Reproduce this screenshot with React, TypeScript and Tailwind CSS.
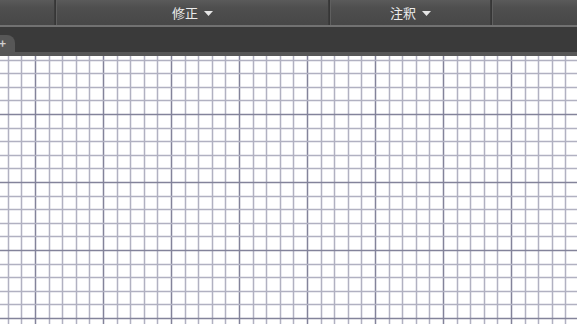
import React from "react";

function Caret() {
  return (
    <svg width="9" height="5" viewBox="0 0 9 5" className="ml-[6px] mt-[1px]">
      <path d="M0 0 H9 L4.5 5 Z" fill="#e6e6e6" />
    </svg>
  );
}

function MenuCell({ label, className }: { label?: string; className: string }) {
  return (
    <div
      className={`flex items-center justify-center h-full border-r border-r-[#363636] shadow-[inset_-1px_0_0_#3c3c3c,1px_0_0_#5f5f5f] ${className}`}
    >
      {label && (
        <>
          <span className="text-[13px] text-[#ececec] leading-none">{label}</span>
          <Caret />
        </>
      )}
    </div>
  );
}

const W = 577;
const H = 268;
const STEP = 13.6;

// graph paper: major lines every 5 cells, at x=35 and y=58 (grid coords)
function Grid() {
  const xs: { p: number; major: boolean }[] = [];
  for (let i = -3; 35 + i * STEP < W; i++) {
    const p = 35 + i * STEP;
    if (p < 0) continue;
    xs.push({ p: Math.round(p), major: ((i % 5) + 5) % 5 === 0 });
  }
  const ys: { p: number; major: boolean }[] = [];
  for (let i = -4; 58 + i * STEP < H; i++) {
    const p = 58 + i * STEP;
    if (p < 0) continue;
    ys.push({ p: Math.round(p), major: ((i % 5) + 5) % 5 === 0 });
  }
  return (
    <svg width={W} height={H} className="block bg-white">
      {xs.map(({ p, major }) => (
        <line
          key={"x" + p}
          x1={p + 0.5}
          x2={p + 0.5}
          y1={0}
          y2={H}
          stroke={major ? "#83839a" : "#b1b1c1"}
          strokeWidth={1.5}
        />
      ))}
      {ys.map(({ p, major }) => (
        <line
          key={"y" + p}
          y1={p + 0.5}
          y2={p + 0.5}
          x1={0}
          x2={W}
          stroke={major ? "#83839a" : "#b1b1c1"}
          strokeWidth={1.5}
        />
      ))}
    </svg>
  );
}

export default function App() {
  return (
    <div className="w-[577px] h-[324px] overflow-hidden flex flex-col bg-white font-['Noto_Sans_CJK_JP','Noto_Sans',sans-serif]">
      {/* menu bar */}
      <div className="flex h-[25px] bg-[linear-gradient(#5a5a5a,#4f4f4f_30%,#474747)]">
        <MenuCell className="w-[56px]" />
        <MenuCell className="w-[274px]" label="修正" />
        <MenuCell className="w-[162px]" label="注釈" />
        <div className="flex-1" />
      </div>
      <div className="h-[2px] bg-[#727272]" />
      {/* tab strip */}
      <div className="h-[25px] bg-[#3a3a3a] flex items-end">
        <div className="w-[15px] h-[17px] bg-[#575757] rounded-tr-[8px] flex items-center">
          <span className="text-[12px] font-bold text-[#cfcfcf] leading-none -ml-[1px] -mt-[2px]">+</span>
        </div>
      </div>
      <div className="h-[4px] bg-[#575757]" />
      <Grid />
    </div>
  );
}
